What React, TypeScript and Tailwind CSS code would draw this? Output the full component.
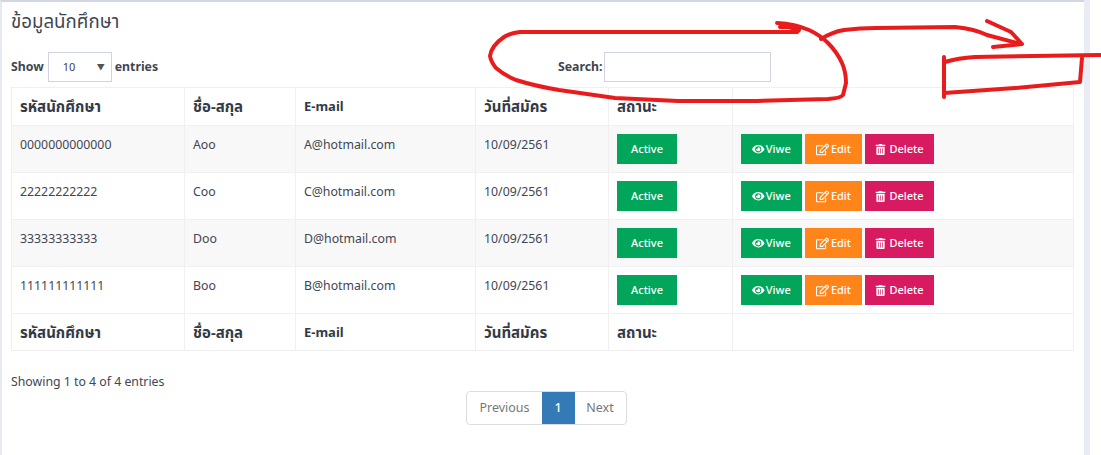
import { FaEye, FaRegEdit, FaTrashAlt } from "react-icons/fa";

const font = "font-['Noto_Sans','Noto_Sans_Thai','Noto_Sans_CJK_SC','DejaVu_Sans',sans-serif]";

const rows = [
  ["0000000000000", "Aoo", "A@hotmail.com", true],
  ["22222222222", "Coo", "C@hotmail.com", false],
  ["33333333333", "Doo", "D@hotmail.com", true],
  ["111111111111", "Boo", "B@hotmail.com", false],
] as const;

const heads = ["รหัสนักศึกษา", "ชื่อ-สกุล", "E-mail", "วันที่สมัคร", "สถานะ", ""];

function HeadRow({ h }: { h: string }) {
  return (
    <tr className={h}>
      {heads.map((t, i) => (
        <th
          key={i}
          className={`border border-[#f0f0f0] px-2 pb-[1px] text-left align-middle font-bold leading-[20px] text-[#333a45] ${
            t === "E-mail" ? "text-[13px]" : "text-[15px]"
          }`}
        >
          {t}
        </th>
      ))}
    </tr>
  );
}

export default function App() {
  return (
    <div className={`${font} relative flex h-[455px] w-[1101px] overflow-hidden bg-white text-[12.3px] text-[#3f4652]`}>
      <div className="h-full w-[1084px] border-l-2 border-t-2 border-l-[#e6e9f0] border-t-[#d2d6e0] pl-[9px] pr-[10px]">
        <h2 className="pt-[7px] text-[18.7px] leading-[23px] text-[#3f4652]">ข้อมูลนักศึกษา</h2>
        <div className="mt-[20px] flex h-[30px] items-center">
          <div className="flex w-[547px] items-center gap-[3px] font-bold">
            <span className="mr-[1px]">Show</span>
            <span className="flex h-[30px] w-[64px] items-center justify-between border border-[#cfd4e0] pl-[14px] pr-[6px] text-[11px] font-normal">
              10 <span className="text-[8px] text-[#555]">▼</span>
            </span>
            <span>entries</span>
          </div>
          <div className="flex items-center gap-[1px] font-bold">
            <span>Search:</span>
            <span className="h-[30px] w-[167px] border border-[#cfd4e0]" />
          </div>
        </div>
        <table className="mt-[5px] w-[1062px] table-fixed border-collapse">
          <colgroup>
            <col className="w-[173px]" />
            <col className="w-[111px]" />
            <col className="w-[180px]" />
            <col className="w-[133px]" />
            <col className="w-[124px]" />
            <col className="w-[341px]" />
          </colgroup>
          <thead>
            <HeadRow h="h-[38px]" />
          </thead>
          <tbody>
            {rows.map(([id, name, mail, odd]) => (
              <tr key={id} className={`h-[47px] ${odd ? "bg-[#f8f8f8]" : "bg-white"}`}>
                <td className="border border-[#f0f0f0] px-2 pb-[7px] align-middle">{id}</td>
                <td className="border border-[#f0f0f0] px-2 pb-[7px] align-middle">{name}</td>
                <td className="border border-[#f0f0f0] px-2 pb-[7px] align-middle">{mail}</td>
                <td className="border border-[#f0f0f0] px-2 pb-[7px] align-middle">10/09/2561</td>
                <td className="border border-[#f0f0f0] px-2 align-middle">
                  <span className="flex h-[30px] w-[60px] items-center justify-center bg-[#02a65b] text-[11px] font-medium text-white">Active</span>
                </td>
                <td className="border border-[#f0f0f0] px-2 align-middle">
                  <div className="flex gap-[3px] text-[11px] font-medium text-white">
                    <span className="flex h-[30px] w-[61px] items-center justify-center gap-[1px] bg-[#02a65b]"><FaEye className="text-[12.5px]" />Viwe</span>
                    <span className="flex h-[30px] w-[57px] items-center justify-center gap-[2px] bg-[#ff851b]"><FaRegEdit className="text-[13px]" />Edit</span>
                    <span className="flex h-[30px] w-[69px] items-center justify-center gap-[3px] bg-[#d81b60]"><FaTrashAlt className="text-[11px]" />Delete</span>
                  </div>
                </td>
              </tr>
            ))}
          </tbody>
          <tfoot>
            <HeadRow h="h-[37px]" />
          </tfoot>
        </table>
        <p className="mt-[22px] leading-[17px]">Showing 1 to 4 of 4 entries</p>
        <div className="mt-[1px] flex justify-center pl-[7px]">
          <div className="flex h-[34px] items-stretch overflow-hidden rounded-[4px] border border-[#dddddd] text-[12.5px] text-[#777]">
            <span className="flex w-[75px] items-center justify-center pl-[1px] pt-[1px]">Previous</span>
            <span className="flex w-[33px] items-center justify-center bg-[#337ab7] pt-[1px] font-medium text-white">1</span>
            <span className="flex w-[51px] items-center justify-center pt-[1px]">Next</span>
          </div>
        </div>
      </div>
      <div className="h-full w-[6px] bg-[#e9edf3]" />
      <svg className="pointer-events-none absolute left-0 top-0" width="1101" height="455" fill="none" stroke="#e81c1c" strokeWidth="4" strokeLinecap="round" strokeLinejoin="round">
        <path d="M780 27 L789 27 L799 30 L797 32 L520 32 Q510 33 504 37 Q491 46 490 56 Q491 62 496 68 Q504 75 516 80 Q535 86 559 90 L615 98 L678 101 L757 101 L828 99 Q841 98 843 95 L846 83 Q846 72 842 63 Q837 52 828 43 Q820 35 809 30 Q795 24 777 23" />
        <path d="M821 39 Q832 32 844 30 Q860 28 876 28 L955 27 Q975 29 987 35 L1021 44" />
        <path d="M987 21 L1011 32 L1022 44 L993 47" />
        <path d="M945 62 Q958 58 975 57 L1100 55" />
        <path d="M944 57 L944 97" />
        <path d="M944 93 L1015 88 L1080 82 L1082 58" />
      </svg>
    </div>
  );
}
